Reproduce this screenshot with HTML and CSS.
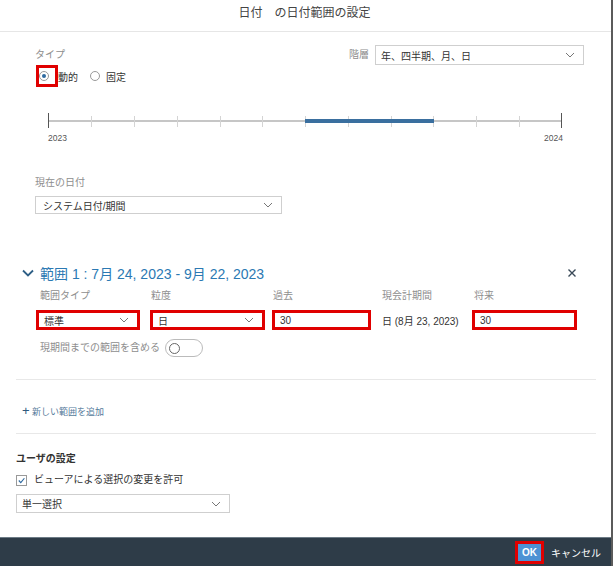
FILE: index.html
```html
<!DOCTYPE html>
<html lang="ja">
<head>
    <meta charset="UTF-8">
    <title>日付範囲の設定</title>
    <link rel="stylesheet" href="styles.css">
</head>
<body>
    <div class="dialog">
        <div class="header">日付　の日付範囲の設定</div>

        <div class="content">
            <div class="top">
                <div class="type-col">
                    <div class="label">タイプ</div>
                    <div class="radios">
                        <span class="mark"><span class="radio checked"></span></span>
                        <span class="radio-text">動的</span>
                        <span class="radio"></span>
                        <span class="radio-text">固定</span>
                    </div>
                </div>
                <div class="hier">
                    <span class="label">階層</span>
                    <div class="select hier-select">年、四半期、月、日<svg class="chev" viewBox="0 0 10 6"><path d="M1 1 L5 5 L9 1"/></svg></div>
                </div>
            </div>

            <div class="timeline">
                <svg width="516" height="20" viewBox="0 0 516 20">
                    <line x1="1" y1="10" x2="514" y2="10" stroke="#c6c6c6" stroke-width="2"/>
                    <g stroke="#d4d4d4" stroke-width="1">
                        <line x1="43.5" y1="5" x2="43.5" y2="16"/>
                        <line x1="86.5" y1="5" x2="86.5" y2="16"/>
                        <line x1="129.5" y1="5" x2="129.5" y2="16"/>
                        <line x1="172.5" y1="5" x2="172.5" y2="16"/>
                        <line x1="214.5" y1="5" x2="214.5" y2="16"/>
                        <line x1="257.5" y1="5" x2="257.5" y2="16"/>
                        <line x1="300.5" y1="5" x2="300.5" y2="16"/>
                        <line x1="343.5" y1="5" x2="343.5" y2="16"/>
                        <line x1="385.5" y1="5" x2="385.5" y2="16"/>
                        <line x1="428.5" y1="5" x2="428.5" y2="16"/>
                        <line x1="471.5" y1="5" x2="471.5" y2="16"/>
                    </g>
                    <line x1="257" y1="10" x2="386" y2="10" stroke="#3a6f9f" stroke-width="4"/>
                    <line x1="0.5" y1="2" x2="0.5" y2="17" stroke="#555" stroke-width="1"/>
                    <line x1="513.5" y1="2" x2="513.5" y2="17" stroke="#555" stroke-width="1"/>
                </svg>
                <div class="years"><span>2023</span><span>2024</span></div>
            </div>

            <div class="current">
                <div class="label">現在の日付</div>
                <div class="select current-select">システム日付/期間<svg class="chev" viewBox="0 0 10 6"><path d="M1 1 L5 5 L9 1"/></svg></div>
            </div>

            <div class="range">
                <div class="range-head">
                    <div class="range-title">
                        <svg class="range-chev" viewBox="0 0 12 8"><path d="M1 1.5 L6 6.5 L11 1.5"/></svg>
                        <span>範囲 1 : 7月 24, 2023 - 9月 22, 2023</span>
                    </div>
                    <svg class="close" viewBox="0 0 10 10"><path d="M1.5 1.5 L8.5 8.5 M8.5 1.5 L1.5 8.5"/></svg>
                </div>

                <div class="fields">
                    <div class="field">
                        <div class="label">範囲タイプ</div>
                        <div class="mark-box w104"><div class="select inner">標準<svg class="chev" viewBox="0 0 10 6"><path d="M1 1 L5 5 L9 1"/></svg></div></div>
                    </div>
                    <div class="field">
                        <div class="label">粒度</div>
                        <div class="mark-box w115"><div class="select inner">日<svg class="chev" viewBox="0 0 10 6"><path d="M1 1 L5 5 L9 1"/></svg></div></div>
                    </div>
                    <div class="field">
                        <div class="label">過去</div>
                        <div class="mark-box w99"><div class="select inner">30</div></div>
                    </div>
                    <div class="field">
                        <div class="label">現会計期間</div>
                        <div class="plain">日 (8月 23, 2023)</div>
                    </div>
                    <div class="field">
                        <div class="label">将来</div>
                        <div class="mark-box w105"><div class="select inner">30</div></div>
                    </div>
                </div>

                <div class="toggle-row">
                    <span class="label">現期間までの範囲を含める</span>
                    <span class="toggle"><span class="knob"></span></span>
                </div>
            </div>

            <div class="divider first"></div>

            <div class="add-range"><span class="plus">+</span> 新しい範囲を追加</div>

            <div class="divider second"></div>

            <div class="user">
                <div class="user-title">ユーザの設定</div>
                <div class="check-row">
                    <span class="checkbox"><svg viewBox="0 0 10 10"><path d="M2 5 L4.2 7.3 L8.2 2.5"/></svg></span>
                    <span>ビューアによる選択の変更を許可</span>
                </div>
                <div class="select user-select">単一選択<svg class="chev" viewBox="0 0 10 6"><path d="M1 1 L5 5 L9 1"/></svg></div>
            </div>
        </div>

        <div class="footer">
            <span class="ok-mark"><span class="ok">OK</span></span>
            <span class="cancel">キャンセル</span>
        </div>
    </div>
</body>
</html>
```

FILE: styles.css
```css
* {
    margin: 0;
    padding: 0;
    box-sizing: border-box;
    font-family: "Liberation Sans", "Noto Sans CJK JP", sans-serif;
}

body {
    width: 613px;
    height: 566px;
    background: #fff;
    color: #333;
    overflow: hidden;
}

.dialog {
    width: 613px;
    height: 566px;
    border-right: 2px solid #5b5b5b;
    display: flex;
    flex-direction: column;
}

.header {
    height: 32px;
    border-bottom: 1px solid #e6e6e6;
    text-align: center;
    font-size: 12px;
    line-height: 26px;
    color: #444;
    padding-right: 2px;
}

.content {
    flex: 1;
    padding: 0 15px 0 16px;
}

.label {
    font-size: 10px;
    line-height: 14px;
    color: #8e8e8e;
}

.select {
    position: relative;
    border: 1px solid #cfcfcf;
    background: #fff;
    font-size: 10px;
    color: #333;
    display: flex;
    align-items: center;
    padding-left: 7px;
}

.chev {
    position: absolute;
    right: 8px;
    top: 50%;
    width: 10px;
    height: 6px;
    margin-top: -3px;
    fill: none;
    stroke: #777;
    stroke-width: 1;
}

/* top row */
.top {
    height: 56px;
    padding: 13px 12px 0 19px;
    display: flex;
    justify-content: space-between;
}

.type-col .label {
    margin-top: 3px;
}

.radios {
    display: flex;
    align-items: center;
    height: 16px;
    margin-top: 6px;
    font-size: 10px;
}

.mark {
    display: flex;
    align-items: center;
    justify-content: center;
    width: 22px;
    height: 22px;
    border: 3px solid #e00000;
    margin-left: 1px;
}

.radio {
    display: inline-block;
    width: 10px;
    height: 10px;
    border: 1px solid #999;
    border-radius: 50%;
    position: relative;
}

.radio.checked::after {
    content: "";
    position: absolute;
    left: 2px;
    top: 2px;
    width: 4px;
    height: 4px;
    border-radius: 50%;
    background: #2f6aa0;
}

.radio-text {
    margin: 0 12px 0 0;
}

.radios .radio {
    margin-right: 6px;
}

.hier {
    display: flex;
    align-items: center;
    gap: 6px;
    height: 20px;
}

.hier-select {
    width: 209px;
    height: 20px;
    padding-left: 5px;
}

/* timeline */
.timeline {
    margin: 23px 0 0 32px;
    width: 516px;
}

.timeline svg {
    display: block;
}

.years {
    display: flex;
    justify-content: space-between;
    width: 515px;
    font-size: 8.5px;
    line-height: 10px;
    color: #555;
    margin-top: 2px;
}

/* current date */
.current {
    margin: 33px 0 0 19px;
}

.current-select {
    width: 247px;
    height: 18px;
    margin-top: 6px;
}

/* range */
.range {
    margin-top: 49px;
}

.range-head {
    display: flex;
    justify-content: space-between;
    align-items: center;
    padding: 0 19px 0 6px;
    height: 20px;
}

.range-title {
    display: flex;
    align-items: center;
    gap: 6px;
    font-size: 14px;
    color: #2b79b3;
}

.range-chev {
    width: 12px;
    height: 8px;
    fill: none;
    stroke: #2e5f86;
    stroke-width: 1.8;
}

.close {
    width: 10px;
    height: 10px;
    fill: none;
    stroke: #3a4a58;
    stroke-width: 1.4;
}

.fields {
    display: grid;
    grid-template-columns: 114px 122px 110px 90px 105px;
    margin: 6px 0 0 20px;
}

.field .label {
    padding-left: 4px;
}

.field:nth-child(2) .label,
.field:nth-child(3) .label {
    padding-left: 1px;
}

.field:nth-child(4) .label {
    padding-left: 0;
}

.field:nth-child(5) .label {
    padding-left: 2px;
}

.mark-box {
    height: 20px;
    border: 3px solid #e00000;
    margin-top: 7px;
}

.w104 { width: 104px; }
.w115 { width: 115px; }
.w99 { width: 99px; }
.w105 { width: 105px; }

.select.inner {
    height: 14px;
    border: none;
    padding-left: 5px;
}

.plain {
    margin-top: 7px;
    height: 20px;
    display: flex;
    align-items: center;
    font-size: 10px;
    color: #333;
}

.toggle-row {
    display: flex;
    align-items: center;
    gap: 5px;
    margin: 9px 0 0 24px;
    height: 18px;
}

.toggle {
    display: flex;
    align-items: center;
    width: 38px;
    height: 18px;
    border: 1px solid #bbb;
    border-radius: 9px;
    padding-left: 3px;
}

.knob {
    width: 11px;
    height: 11px;
    border: 1px solid #666;
    border-radius: 50%;
}

.divider {
    height: 1px;
    background: #e8e8e8;
}

.divider.first {
    margin-top: 22px;
}

.add-range {
    margin: 24px 0 0 6px;
    font-size: 9px;
    line-height: 14px;
    color: #557a9a;
}

.plus {
    font-size: 13px;
    color: #2f5a7e;
}

.divider.second {
    margin-top: 14px;
}

/* user settings */
.user-title {
    margin-top: 18px;
    font-size: 10px;
    line-height: 14px;
    font-weight: bold;
    color: #333;
}

.check-row {
    display: flex;
    align-items: center;
    gap: 7px;
    margin-top: 7px;
    font-size: 10px;
    line-height: 14px;
    color: #333;
}

.checkbox {
    display: flex;
    width: 11px;
    height: 11px;
    border: 1px solid #999;
}

.checkbox svg {
    width: 9px;
    height: 9px;
    fill: none;
    stroke: #2f6aa0;
    stroke-width: 1.3;
}

.user-select {
    width: 214px;
    height: 19px;
    margin-top: 7px;
    padding-left: 5px;
}

/* footer */
.footer {
    height: 29px;
    background: #2e3c48;
    border-top: 1px solid #6d7b86;
    display: flex;
    justify-content: flex-end;
    align-items: center;
    padding-right: 10px;
}

.ok-mark {
    display: flex;
    border: 3px solid #e00000;
    margin-right: 7px;
}

.ok {
    display: block;
    width: 23px;
    height: 17px;
    background: #4d92d4;
    color: #fff;
    font-size: 10px;
    font-weight: bold;
    line-height: 17px;
    text-align: center;
}

.cancel {
    font-size: 10px;
    color: #fff;
}
```
